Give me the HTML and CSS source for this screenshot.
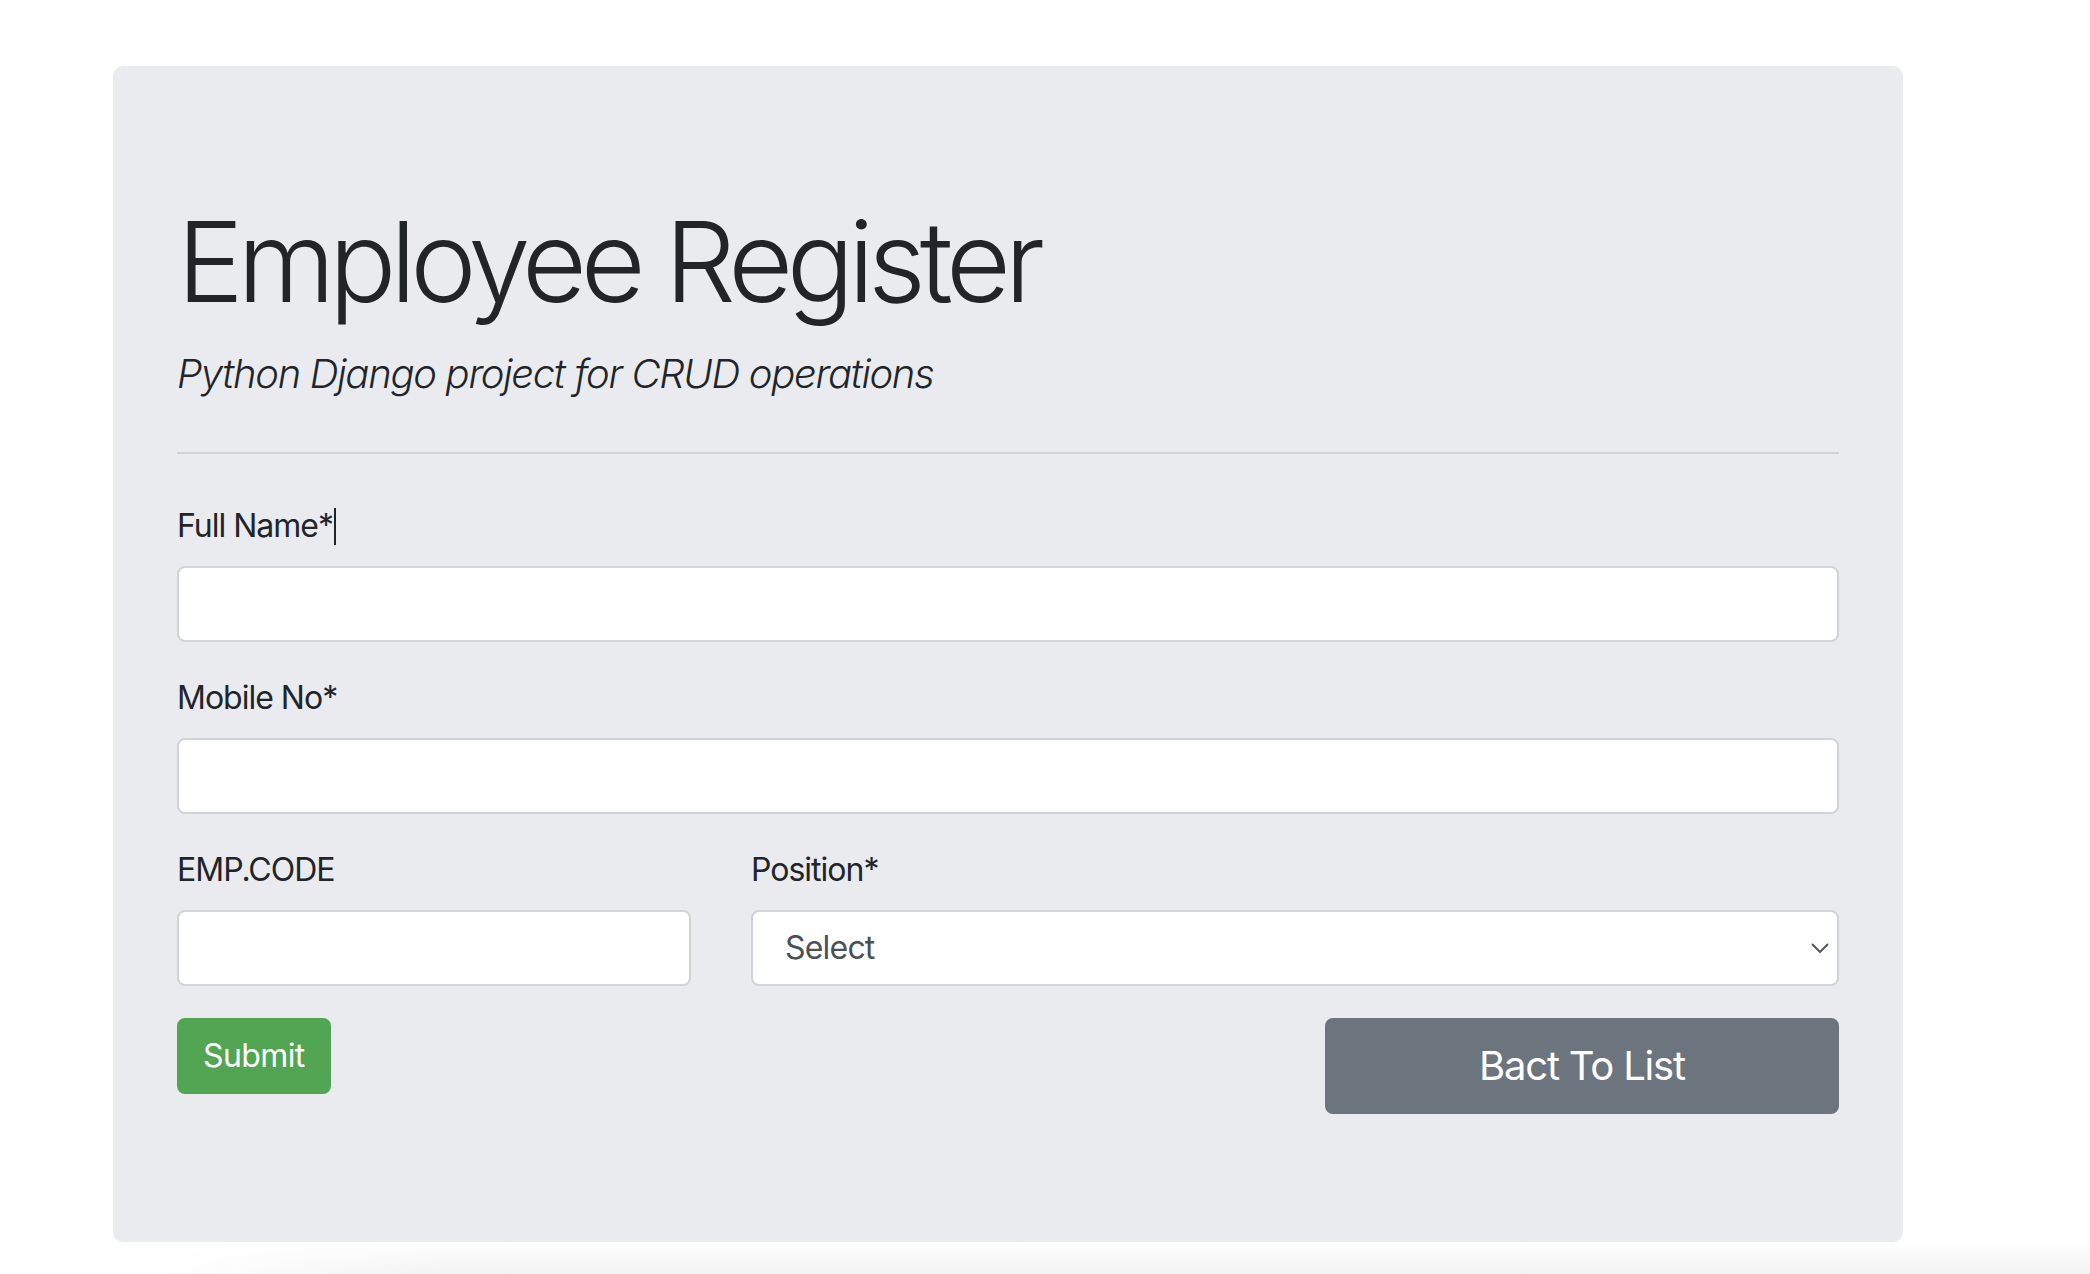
FILE: index.html
```html
<!DOCTYPE html>
<html lang="en">
<head>
<meta charset="utf-8">
<title>Employee Register</title>
<link rel="stylesheet" href="styles.css">
</head>
<body>
<div class="page">
  <div class="jumbotron">
    <h1 class="display">Employee Register</h1>
    <p class="lead">Python Django project for CRUD operations</p>
    <hr class="divider">
    <form class="form">
      <div class="form-group">
        <label class="label">Full Name*<span class="caret"></span></label>
        <input class="control" type="text">
      </div>
      <div class="form-group">
        <label class="label">Mobile No*</label>
        <input class="control" type="text">
      </div>
      <div class="row form-group">
        <div class="col col-4">
          <label class="label">EMP.CODE</label>
          <input class="control" type="text">
        </div>
        <div class="col col-8">
          <label class="label">Position*</label>
          <div class="select">Select
            <svg class="chevron" width="18" height="10" viewBox="0 0 18 10"><path d="M1 1 L9 9 L17 1" fill="none" stroke="#555" stroke-width="2"/></svg>
          </div>
        </div>
      </div>
      <div class="row">
        <div class="col col-4">
          <button class="btn btn-success" type="button">Submit</button>
        </div>
        <div class="col col-4 offset-4">
          <button class="btn btn-secondary btn-lg" type="button">Bact To List</button>
        </div>
      </div>
    </form>
  </div>
  <div class="shadow"></div>
</div>
</body>
</html>
```
FILE: styles.css
```css
html, body {
  margin: 0;
  padding: 0;
  background: #fff;
}
body {
  font-family: Inter, "Liberation Sans", sans-serif;
  color: #212529;
  font-size: 32px;
  line-height: 1.5;
  overflow: hidden;
  height: 1274px;
}
.page {
  padding-top: 66px;
  padding-left: 113px;
}
.jumbotron {
  width: 1790px;
  box-sizing: border-box;
  background: #e9ebef;
  border-radius: 10px;
  padding: 128px 64px;
}
.display {
  margin: 0 0 16px;
  font-size: 112px;
  font-weight: 300;
  line-height: 1.2;
  letter-spacing: -6.2px;
}
.lead {
  margin: 0;
  font-size: 40px;
  font-weight: 300;
  font-style: italic;
  line-height: 60px;
  letter-spacing: -1.3px;
}
.divider {
  margin: 48px 0;
  border: 0;
  border-top: 2px solid rgba(0,0,0,0.1);
}
.form-group {
  margin-bottom: 32px;
}
.label {
  display: block;
  margin-bottom: 16px;
  line-height: 48px;
  letter-spacing: -1px;
  position: relative;
}
.caret {
  display: inline-block;
  width: 2px;
  height: 37px;
  background: #222;
  vertical-align: -8px;
  margin-left: 1px;
}
.control, .select {
  display: block;
  width: 100%;
  height: 76px;
  box-sizing: border-box;
  border: 2px solid #ced4da;
  border-radius: 8px;
  background: #fff;
  font: inherit;
  padding: 12px 24px;
  color: #495057;
}
.select {
  position: relative;
  padding-left: 32px;
  line-height: 48px;
  letter-spacing: -0.8px;
}
.chevron {
  position: absolute;
  right: 8px;
  top: 31px;
}
.row {
  display: flex;
  margin: 0 -30px;
}
.col {
  padding: 0 30px;
  box-sizing: border-box;
}
.col-4 { flex: 0 0 33.3333%; }
.col-8 { flex: 0 0 66.6667%; }
.offset-4 { margin-left: 33.3333%; }
.row.form-group { margin-bottom: 32px; }
.btn {
  font: inherit;
  border: 2px solid transparent;
  border-radius: 8px;
  padding: 12px 24px;
  line-height: 48px;
  color: #fff;
  cursor: pointer;
  letter-spacing: -0.6px;
}
.btn-success {
  background: #52a552;
  border-color: #52a552;
}
.btn-secondary {
  background: #6c757d;
  border-color: #6c757d;
}
.btn-lg {
  display: block;
  width: 100%;
  font-size: 40px;
  line-height: 60px;
  padding: 16px 32px;
  letter-spacing: -1.2px;
}
.shadow {
  height: 40px;
  margin-left: 40px;
  background: linear-gradient(to bottom, #fff 0%, #efefef 100%);
  -webkit-mask-image: linear-gradient(to right, transparent 0, #000 300px);
  mask-image: linear-gradient(to right, transparent 0, #000 300px);
}
```
